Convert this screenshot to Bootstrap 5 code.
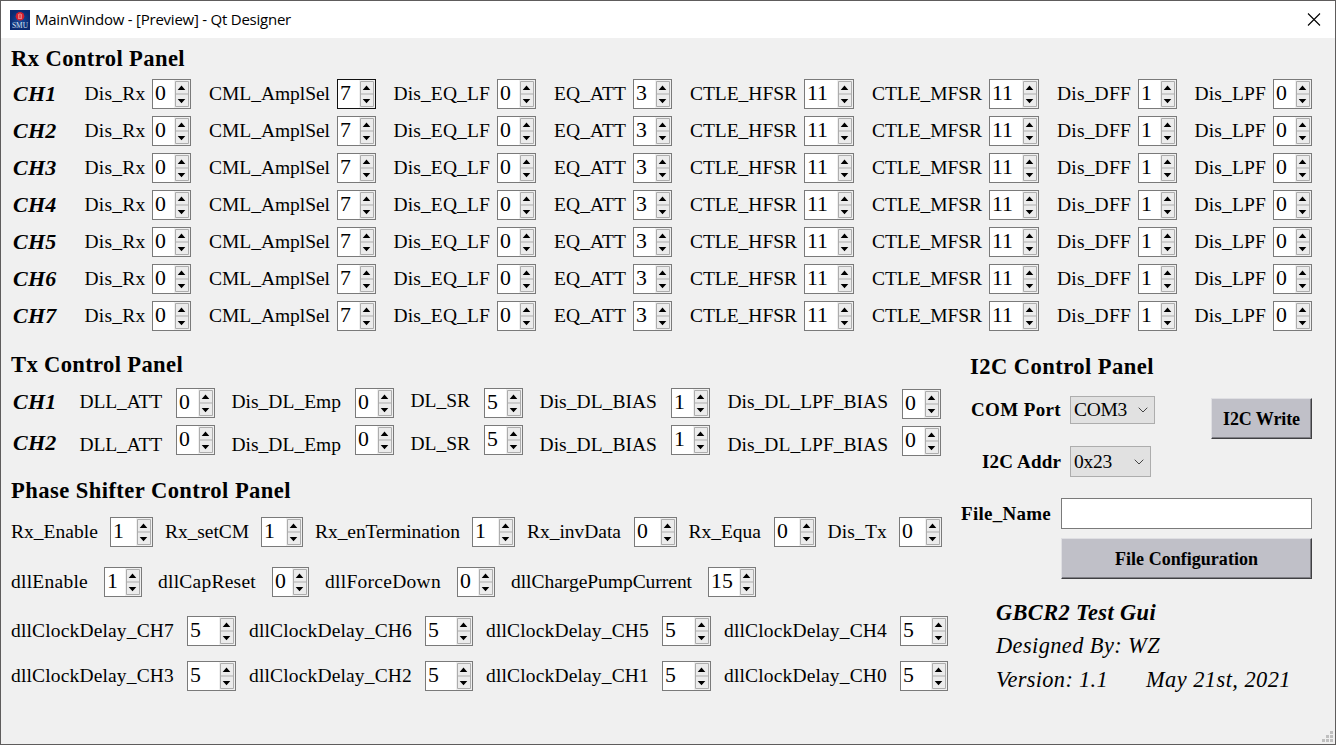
<!DOCTYPE html>
<html lang="en">
<head>
<meta charset="utf-8">
<meta name="viewport" content="width=device-width, initial-scale=1">
<title>MainWindow - [Preview] - Qt Designer</title>
<link href="https://cdn.jsdelivr.net/npm/bootstrap@5.3.0/dist/css/bootstrap.min.css" rel="stylesheet">
<style>
  body { font-family: "Liberation Serif", "Times New Roman", serif; font-size: 19.5px; line-height: 22px; color: #000; background: #f0f0f0; }
  .win { width: 1336px; height: 745px; border: 1px solid #5e5c5c; background: #f0f0f0; }
  .titlebar { height: 37px; padding: 0 14px 0 9px; background: #fff; font-family: "Open Sans", sans-serif; font-size: 15px; }
  .titlebar .fit { padding-bottom: 2px; }
  .app-icon { margin-right: 5px; }
  .fit { display: block; flex: none; white-space: pre; }
  .panel-title { font-size: 22.6px; font-weight: 700; line-height: 26px; margin: 0 0 0 10px; }
  .chan { font-size: 22px; font-weight: 700; font-style: italic; }
  .line { height: 30px; }
  .rx { padding-top: 8px; }
  .rx .panel-title { margin-bottom: 7px; }
  .rx .line { margin-bottom: 7px; }
  .tx .line { margin-bottom: 7px; }
  .left-col { width: 951px; padding-top: 14px; }
  .tx .panel-title { margin-bottom: 10px; }
  .phase .panel-title { margin-top: 23px; margin-bottom: 13px; }
  .phase .line:nth-of-type(1) { margin-bottom: 20px; }
  .phase .line:nth-of-type(2) { margin-bottom: 19px; }
  .phase .line:nth-of-type(3) { margin-bottom: 15px; }
  .spin { height: 30px; flex: none; border: 1px solid #7a7a7a; background: #fff; padding-left: 2px; font-size: 21.8px; line-height: 27px; }
  .spin.focused { border-color: #111; }
  .spin svg { display: block; flex: none; }
  .right-col { width: 383px; padding: 16px 23px 0 8px; }
  .right-col .panel-title { margin-left: 10px; }
  .bold-lbl { font-weight: 700; font-size: 19px; }
  .combo { border: 1px solid #adadad; background: #e1e1e1; padding: 0 6px 0 3px; }
  .combo-com { width: 85px; height: 28px; }
  .combo-addr { width: 81px; height: 31px; }
  .bold-lbl.gap-after { margin-right: 9px; }
  .btn-raised { background: #c0c0c8; border-radius: 0; border: 1px solid; border-color: #dfdfe3 #404043 #404043 #dfdfe3; box-shadow: inset -1px -1px #808086; height: 41px; padding: 1px 0 0; color: #000; font-weight: 700; font-size: 18px; line-height: 22px; }
  .btn-write { width: 101px; }
  .btn-file { width: 251px; }
  .file-box { width: 251px; height: 31px; border: 1px solid #7a7a7a; border-radius: 0; background: #fff; }
  .port-row { height: 41px; margin-top: 18px; }
  .port-pair { height: 24px; margin-left: 11px; }
  .addr-row { height: 31px; margin-top: 7px; padding-left: 22px; }
  .file-row { height: 31px; margin-top: 21px; padding-left: 1px; }
  .conf-row { margin-top: 9px; }
  .about { padding: 21px 0 0 36px; font-size: 22.4px; font-style: italic; line-height: 26px; }
  .about > div { margin-bottom: 7.3px; }
  .date { margin-left: 38px; }
  .grip { right: 2px; bottom: 2px; line-height: 0; }
</style>
</head>
<body>
<div class="win position-relative overflow-hidden">
  <header class="titlebar d-flex align-items-center">
    <svg class="app-icon" width="20" height="20" viewBox="0 0 20 20">
      <defs><radialGradient id="blue"><stop offset="0" stop-color="#1a4b9c"/><stop offset="1" stop-color="#0b2a70"/></radialGradient></defs>
      <rect width="20" height="20" fill="url(#blue)"/>
      <circle cx="10" cy="6.2" r="4.3" fill="#d5202f"/>
      <path d="M8 8.5h4M8.5 5v3M10 4.3v4M11.5 5v3M8 4.8l2-1 2 1" stroke="#f2a0a0" stroke-width=".7" fill="none"/>
      <text x="10" y="18" text-anchor="middle" textLength="16" lengthAdjust="spacingAndGlyphs" font-family="Liberation Serif" font-size="8" fill="#d5e2f2">SMU</text>
    </svg>
    <span class="fit" data-w="256">MainWindow - [Preview] - Qt Designer</span>
    <svg class="ms-auto" width="14" height="14" viewBox="0 0 14 14"><path d="M1 .5l12 12M13 .5L1 12.5" stroke="#000" stroke-width="1.1"/></svg>
  </header>

  <section class="rx">
    <h2 class="panel-title"><span class="fit" data-w="174">Rx Control Panel</span></h2>
    <div id="rxRows"></div>
  </section>

  <div class="d-flex">
    <div class="left-col">
      <section class="tx">
        <h2 class="panel-title"><span class="fit" data-w="172">Tx Control Panel</span></h2>
        <div id="txRows"></div>
      </section>
      <section class="phase">
        <h2 class="panel-title"><span class="fit" data-w="280">Phase Shifter Control Panel</span></h2>
        <div id="phaseRows"></div>
      </section>
    </div>

    <div class="right-col">
      <h2 class="panel-title"><span class="fit" data-w="184">I2C Control Panel</span></h2>
      <div class="port-row d-flex">
        <div class="port-pair d-flex align-items-center">
          <span class="fit bold-lbl gap-after" data-w="90">COM Port</span>
          <div class="combo combo-com d-flex align-items-center justify-content-between">
            <span class="fit" data-w="53">COM3</span>
            <svg width="10" height="6" viewBox="0 0 10 6"><path d="M.7.7L5 5 9.3.7" fill="none" stroke="#444"/></svg>
          </div>
        </div>
        <button class="btn btn-raised btn-write ms-auto" type="button"><span class="fit mx-auto" data-w="77">I2C Write</span></button>
      </div>
      <div class="addr-row d-flex align-items-center">
        <span class="fit bold-lbl gap-after" data-w="79">I2C Addr</span>
        <div class="combo combo-addr d-flex align-items-center justify-content-between">
          <span class="fit" data-w="38">0x23</span>
          <svg width="10" height="6" viewBox="0 0 10 6"><path d="M.7.7L5 5 9.3.7" fill="none" stroke="#444"/></svg>
        </div>
      </div>
      <div class="file-row d-flex align-items-center justify-content-between">
        <span class="fit bold-lbl" data-w="90">File_Name</span>
        <input class="form-control file-box" type="text" aria-label="File name">
      </div>
      <div class="conf-row d-flex justify-content-end">
        <button class="btn btn-raised btn-file" type="button"><span class="fit mx-auto" data-w="143">File Configuration</span></button>
      </div>
      <div class="about">
        <div class="fw-bold"><span class="fit" data-w="160">GBCR2 Test Gui</span></div>
        <div><span class="fit" data-w="164">Designed By: WZ</span></div>
        <div class="d-flex"><span class="fit" data-w="112">Version: 1.1</span><span class="fit date" data-w="145">May 21st, 2021</span></div>
      </div>
    </div>
  </div>

  <div class="grip position-absolute">
    <svg width="11" height="11" viewBox="0 0 11 11" fill="#bfbfbf"><path d="M8 0h3v3H8zM4 4h3v3H4zM8 4h3v3H8zM0 8h3v3H0zM4 8h3v3H4zM8 8h3v3H8z"/></svg>
  </div>
</div>

<script src="https://cdn.jsdelivr.net/npm/bootstrap@5.3.0/dist/js/bootstrap.bundle.min.js"></script>
<script>
  // Field: [label, label start, label end, spin start, spin end, value, label shift, spin shift]
  const rx = [
    ['Dis_Rx', 84.5, 145.5, 152, 191, 0], ['CML_AmplSel', 209, 330, 337, 376, 7],
    ['Dis_EQ_LF', 393.5, 490, 497, 536, 0], ['EQ_ATT', 554, 626, 633, 672, 3],
    ['CTLE_HFSR', 690, 797, 804, 854, 11], ['CTLE_MFSR', 872, 982, 989, 1039, 11],
    ['Dis_DFF', 1057, 1131, 1138, 1177, 1], ['Dis_LPF', 1194.5, 1266, 1273, 1312, 0]
  ];
  const tx = (a, b) => [
    ['DLL_ATT', 79.5, 162, 176, 215, 0, a], ['Dis_DL_Emp', 231.5, 341, 355, 394, 0, a],
    ['DL_SR', 410.5, 470, 484, 523, 5, b], ['Dis_DL_BIAS', 539.5, 657, 671, 710, 1, a],
    ['Dis_DL_LPF_BIAS', 727.5, 888, 902, 941, 0, a, 1]
  ];
  const phase = [
    [['Rx_Enable', 11, 98, 110, 153, 1], ['Rx_setCM', 165, 249, 261, 303, 1],
     ['Rx_enTermination', 315, 460, 472, 515, 1], ['Rx_invData', 527, 621, 634, 677, 0],
     ['Rx_Equa', 688.5, 761, 774, 816, 0], ['Dis_Tx', 827.5, 887, 899, 942, 0]],
    [['dllEnable', 11, 88, 104, 142, 1], ['dllCapReset', 158, 256, 272, 309, 0],
     ['dllForceDown', 325, 441, 457, 495, 0], ['dllChargePumpCurrent', 511, 692, 708, 756, 15]]
  ];
  const delay = names => names.map((n, i) => {
    const c = [[11, 174, 187, 236], [249, 412, 425, 473], [486, 649, 662, 711], [724, 887, 900, 948]][i];
    return ['dllClockDelay_' + n, ...c, 5];
  });
  phase.push(delay(['CH7', 'CH6', 'CH5', 'CH4']), delay(['CH3', 'CH2', 'CH1', 'CH0']));

  const arrows = `<svg width="16" height="28" viewBox="0 0 16 28"><path d="M0 0h16v28H0z" fill="#f0f0f0"/>
    <path d="M1.5 1.5h13v25h-13zM1.5 14h13" fill="#ececec" stroke="#adadad"/>
    <path d="M7.5 5.6L11.3 10H3.7zM3.7 19h7.6L7.5 23.2z" fill="#000"/></svg>`;
  const shift = d => d ? (d > 0 ? `padding-top:${2 * d}px;` : `padding-bottom:${-2 * d}px;`) : '';

  function row(fields, chan, chanShift, focus) {
    let x = 1, html = '';
    if (chan) {
      html += `<span class="fit chan" data-w="43.5" style="margin-left:12px;${shift(chanShift)}">${chan}</span>`;
      x = 56.5;
    }
    fields.forEach(([t, a, b, s, e, v, dy, sdy], i) => {
      html += `<span class="fit" data-w="${b - a}" style="margin-left:${a - x}px;${shift(dy)}">${t}</span>
        <div class="spin d-flex justify-content-between ${focus && i === 1 ? 'focused' : ''}" style="width:${e - s}px;margin-left:${s - b}px;${sdy ? 'margin-top:' + 2 * sdy + 'px' : ''}"><span>${v}</span>${arrows}</div>`;
      x = e;
    });
    return `<div class="line d-flex align-items-center">${html}</div>`;
  }
  rxRows.innerHTML = [1, 2, 3, 4, 5, 6, 7].map(n => row(rx, 'CH' + n, 0, n === 1)).join('');
  txRows.innerHTML = row(tx(-1, -2), 'CH1', -1) + row(tx(5, 4), 'CH2', 3);
  phaseRows.innerHTML = phase.map(r => row(r)).join('');

  // Give each caption its nominal width by spreading the difference over its letters
  document.querySelectorAll('.fit').forEach(el => {
    const r = document.createRange();
    r.selectNodeContents(el);
    const w = +el.dataset.w;
    el.style.letterSpacing = (w - r.getBoundingClientRect().width) / el.textContent.length + 'px';
    el.style.width = w + 'px';
  });
</script>
</body>
</html>
